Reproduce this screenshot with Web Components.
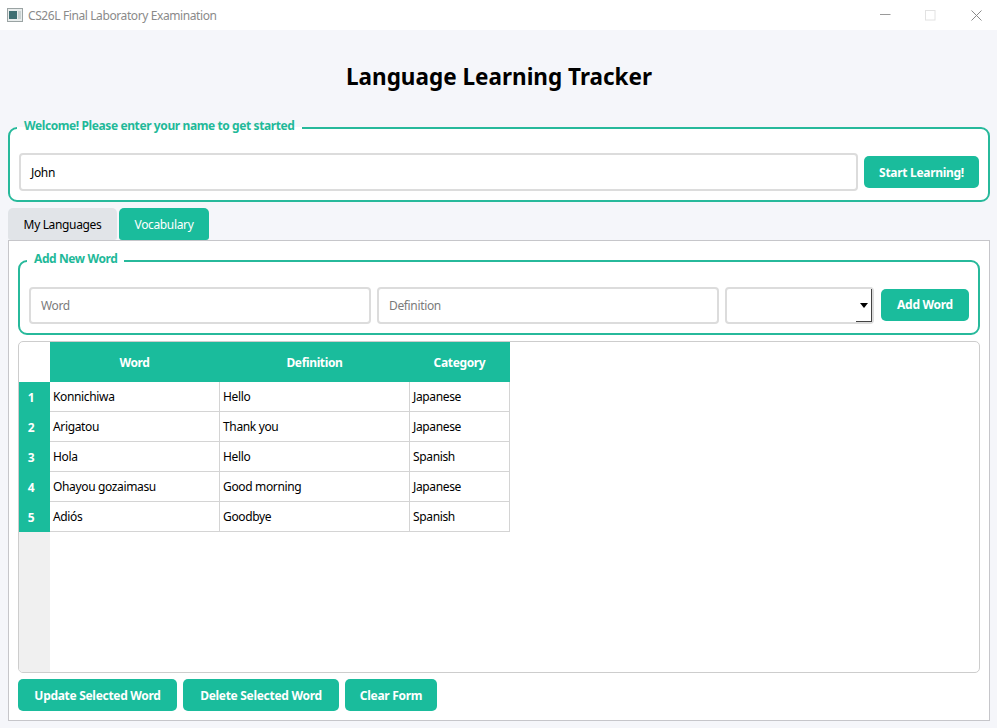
<!DOCTYPE html>
<html><head><meta charset="utf-8">
<style>
html,body{margin:0;padding:0;background:#f5f6fa;}
body{font-family:"Noto Sans","Open Sans",sans-serif;font-size:12px;letter-spacing:-.35px;color:#000;width:997px;height:728px;overflow:hidden;}
</style></head>
<body>
<app-root></app-root>
<script>
function el(name, css, html){
  customElements.define(name, class extends HTMLElement{
    constructor(){super();this.attachShadow({mode:'open'}).innerHTML='<style>'+css+'</style>'+(typeof html==='function'?html(this):html);}
  });
}
el('title-bar',`
:host{display:flex;align-items:center;height:30px;background:#fff;box-sizing:border-box;padding-left:7px;}
.t{font-size:12px;letter-spacing:-.4px;color:#8a8a8a;margin-left:5px;white-space:nowrap;flex:1;}
.b{display:flex;width:46px;height:30px;align-items:center;justify-content:center;}
svg{display:block}
`,`
<svg width="16" height="14" viewBox="0 0 16 14"><rect x=".5" y=".5" width="15" height="13" fill="#e9eded" stroke="#9aa3a3"/><rect x="2" y="3" width="8" height="8" fill="#3f6f73"/><rect x="11" y="3" width="3" height="8" fill="#c9d2d2"/></svg>
<span class="t">CS26L Final Laboratory Examination</span>
<span class="b"><svg width="11" height="11" viewBox="0 0 11 11"><path d="M0 4.5H10.5" stroke="#9a9a9a" fill="none"/></svg></span>
<span class="b" style="width:45px;margin-right:2px"><svg width="11" height="11" viewBox="0 0 11 11"><rect x=".5" y=".5" width="9.5" height="9.5" stroke="#e2e2e2" fill="none"/></svg></span>
<span class="b" style="width:42px"><svg width="11" height="11" viewBox="0 0 11 11"><path d="M.5.5L10.5 10.5M10.5.5L.5 10.5" stroke="#8a8a8a" fill="none"/></svg></span>
`);
el('group-box',`
:host{display:block;}
fieldset{margin:0;box-sizing:border-box;border:2px solid #27b99b;border-radius:9px;background:#fff;padding:0 9px 9px 9px;height:84px;display:flex;align-items:flex-end;}
.row{display:flex;align-items:center;gap:6px;width:100%;}
legend{margin-left:-2px;padding:0 7px 3px;color:#1fb999;font-weight:700;font-size:12px;letter-spacing:-.4px;line-height:16px;}
`,h=>`<fieldset><legend>${h.getAttribute('label')}</legend><div class="row"><slot></slot></div></fieldset>`);
el('text-field',`
:host{display:flex;align-items:center;box-sizing:border-box;height:37px;flex:1 1 0;background:#fff;border:2px solid #dcdcdc;border-radius:4px;padding:0 9px 0 10px;font-size:12px;color:#000;min-width:0;}
:host([placeholder]){color:#7b7b7b;}
`,`<slot></slot>`);
el('combo-box',`
:host{display:flex;justify-content:flex-end;box-sizing:border-box;height:37px;width:149px;flex:none;background:#fff;border:2px solid #dcdcdc;border-radius:4px;}
.a{width:16px;height:33px;box-sizing:border-box;border-right:1px solid #444;border-bottom:1px solid #444;display:flex;align-items:center;justify-content:center;}
i{display:block;width:0;height:0;border-left:4px solid transparent;border-right:4px solid transparent;border-top:5px solid #000;}
`,`<div class="a"><i></i></div>`);
el('app-button',`
:host{display:inline-flex;align-items:center;justify-content:center;box-sizing:border-box;height:32px;flex:none;background:#1abc9c;color:#fff;border-radius:5px;font-weight:700;font-size:12px;letter-spacing:-.3px;white-space:nowrap;}
`,`<slot></slot>`);
el('tab-bar',`
:host{display:flex;gap:2px;height:32px;}
`,`<slot></slot>`);
el('tab-item',`
:host{display:flex;align-items:center;justify-content:center;box-sizing:border-box;height:32px;background:#e1e4e8;color:#000;border-radius:5px 5px 3px 3px;font-size:12px;}
:host([active]){background:#1abc9c;color:#fff;}
`,`<slot></slot>`);
el('tab-panel',`
:host{display:flex;flex-direction:column;box-sizing:border-box;height:481px;border:1px solid #c6c6ca;background:#fff;padding:10px 9px 0 9px;}
`,`<slot></slot>`);
el('btn-row',`:host{display:flex;gap:6px;margin-top:6px;}`,`<slot></slot>`);
const rows=[['Konnichiwa','Hello','Japanese'],['Arigatou','Thank you','Japanese'],['Hola','Hello','Spanish'],['Ohayou gozaimasu','Good morning','Japanese'],['Adiós','Goodbye','Spanish']];
el('data-table',`
:host{display:block;box-sizing:border-box;height:332px;margin-top:6px;border:1px solid #cdcdcd;border-radius:5px;overflow:hidden;background:#fff;}
.g{display:grid;grid-template-columns:31px 170px 190px 100px;grid-template-rows:40px repeat(5,30px) 1fr;height:100%;}
.c{display:flex;align-items:center;box-sizing:border-box;font-size:12px;}
.h{background:#1abc9c;color:#fff;font-weight:700;justify-content:center;padding-right:1px;}
.n{background:#1abc9c;color:#fff;font-weight:700;justify-content:center;padding-right:7px;}
.d{padding-left:3px;border-right:1px solid #d4d4d4;border-bottom:1px solid #d4d4d4;}
.e{background:#f0f0f0;}
`,`<div class="g"><div class="c"></div><div class="c h">Word</div><div class="c h">Definition</div><div class="c h">Category</div>${rows.map((r,i)=>`<div class="c n">${i+1}</div>${r.map(x=>`<div class="c d">${x}</div>`).join('')}`).join('')}<div class="e"></div></div>`);
el('app-root',`
:host{display:block;}
.m{padding:0 7px 0 8px;display:flex;flex-direction:column;}
h1{margin:0;height:88px;line-height:30px;padding-top:32px;text-align:center;font-size:22.5px;letter-spacing:0;font-weight:700;color:#000;box-sizing:border-box;}
.s{height:6px}
`,`
<title-bar></title-bar>
<div class="m">
<h1>Language Learning Tracker</h1>
<group-box label="Welcome! Please enter your name to get started">
  <text-field style="height:38px">John</text-field><app-button style="width:115px">Start Learning!</app-button>
</group-box>
<div class="s"></div>
<tab-bar><tab-item style="width:109px">My Languages</tab-item><tab-item active style="width:90px">Vocabulary</tab-item></tab-bar>
<tab-panel>
  <group-box label="Add New Word">
    <text-field placeholder>Word</text-field><text-field placeholder>Definition</text-field><combo-box></combo-box><app-button style="width:88px;margin-left:1px;margin-bottom:2px">Add Word</app-button>
  </group-box>
  <data-table></data-table>
  <btn-row><app-button style="width:159px">Update Selected Word</app-button><app-button style="width:156px">Delete Selected Word</app-button><app-button style="width:92px">Clear Form</app-button></btn-row>
</tab-panel>
</div>`);
</script>
</body></html>
